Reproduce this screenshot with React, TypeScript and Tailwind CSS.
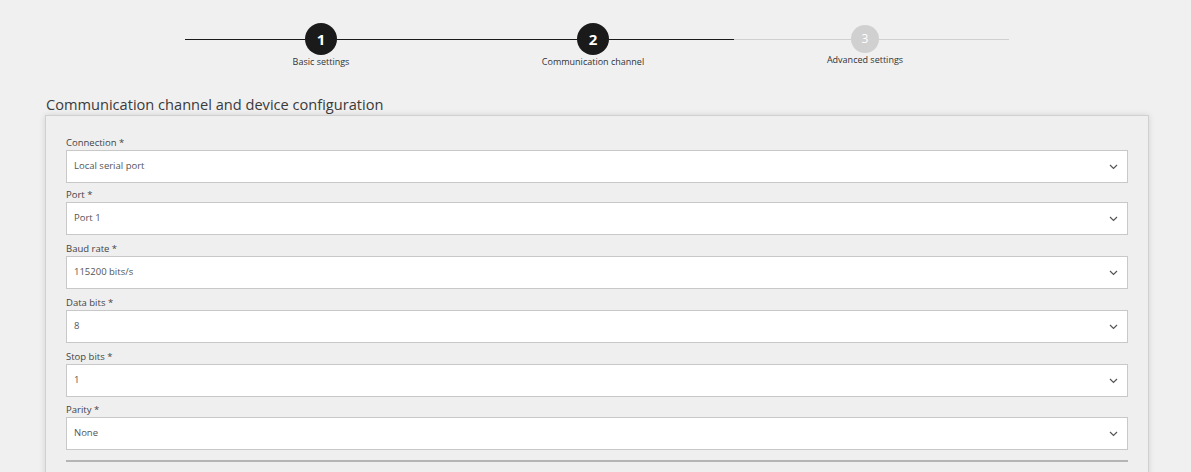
import { ReactNode } from "react";

const fields = [
  { label: "Connection", value: "Local serial port", gap: "" },
  { label: "Port", value: "Port 1", gap: "pt-[5px]" },
  { label: "Baud rate", value: "115200 bits/s", gap: "pt-[7px]" },
  { label: "Data bits", value: "8", gap: "pt-[7px]" },
  { label: "Stop bits", value: "1", gap: "pt-[7px]" },
  { label: "Parity", value: "None", gap: "pt-[6px]" },
];

const Chevron = () => (
  <svg width="9" height="6" viewBox="0 0 9 6" fill="none">
    <polyline points="1,1 4.5,4.5 8,1" stroke="#555" strokeWidth="1.2" />
  </svg>
);

const Step = ({
  n,
  label,
  active,
}: {
  n: number;
  label: string;
  active: boolean;
}): ReactNode => (
  <div className="relative shrink-0">
    {active ? (
      <div className="w-[32px] h-[32px] rounded-full bg-[#1a1a1a] text-white flex items-center justify-center text-[15px] font-bold">
        {n}
      </div>
    ) : (
      <div className="w-[28px] h-[28px] rounded-full bg-[#d0d0d0] text-white flex items-center justify-center text-[12px]">
        {n}
      </div>
    )}
    <div className="absolute top-full left-1/2 -translate-x-1/2 mt-[1px] whitespace-nowrap text-[9px] leading-[12px] text-[#333]">
      {label}
    </div>
  </div>
);

export default function App() {
  return (
    <div
      className="min-h-screen bg-[#f0f0f0] text-[#333]"
      style={{ fontFamily: '"Open Sans", "Noto Sans", sans-serif' }}
    >
      {/* Stepper */}
      <div className="pt-[23px] pl-[185px] h-[94px]">
        <div className="flex items-center h-[32px]">
          <div className="w-[120px] h-px bg-[#1a1a1a]" />
          <Step n={1} label="Basic settings" active />
          <div className="w-[240px] h-px bg-[#1a1a1a]" />
          <Step n={2} label="Communication channel" active />
          <div className="w-[125px] h-px bg-[#1a1a1a]" />
          <div className="w-[117px] h-px bg-[#d0d0d0]" />
          <Step n={3} label="Advanced settings" active={false} />
          <div className="w-[130px] h-px bg-[#d0d0d0]" />
        </div>
      </div>

      <h2 className="ml-[46px] text-[14.6px] leading-[21px] text-[#3a3a3a]">
        Communication channel and device configuration
      </h2>

      <div className="ml-[45px] w-[1104px] border border-[#d0d0d0] bg-[#efefef] shadow-[0_0_6px_rgba(0,0,0,0.12)] px-5 pt-[20px] pb-10">
        {fields.map((f) => (
          <div key={f.label} className={f.gap}>
            <div className="h-[14px] text-[9.5px] leading-[14px] text-[#444]">
              {f.label} *
            </div>
            <div className="h-[33px] bg-white border border-[#c8c8c8] flex items-center justify-between pl-[7px] pr-[9px] text-[9.5px] text-[#555]">
              <span>{f.value}</span>
              <Chevron />
            </div>
          </div>
        ))}
        <div className="mt-[10px] h-[2px] bg-[#b5b5b5]" />
      </div>
    </div>
  );
}
